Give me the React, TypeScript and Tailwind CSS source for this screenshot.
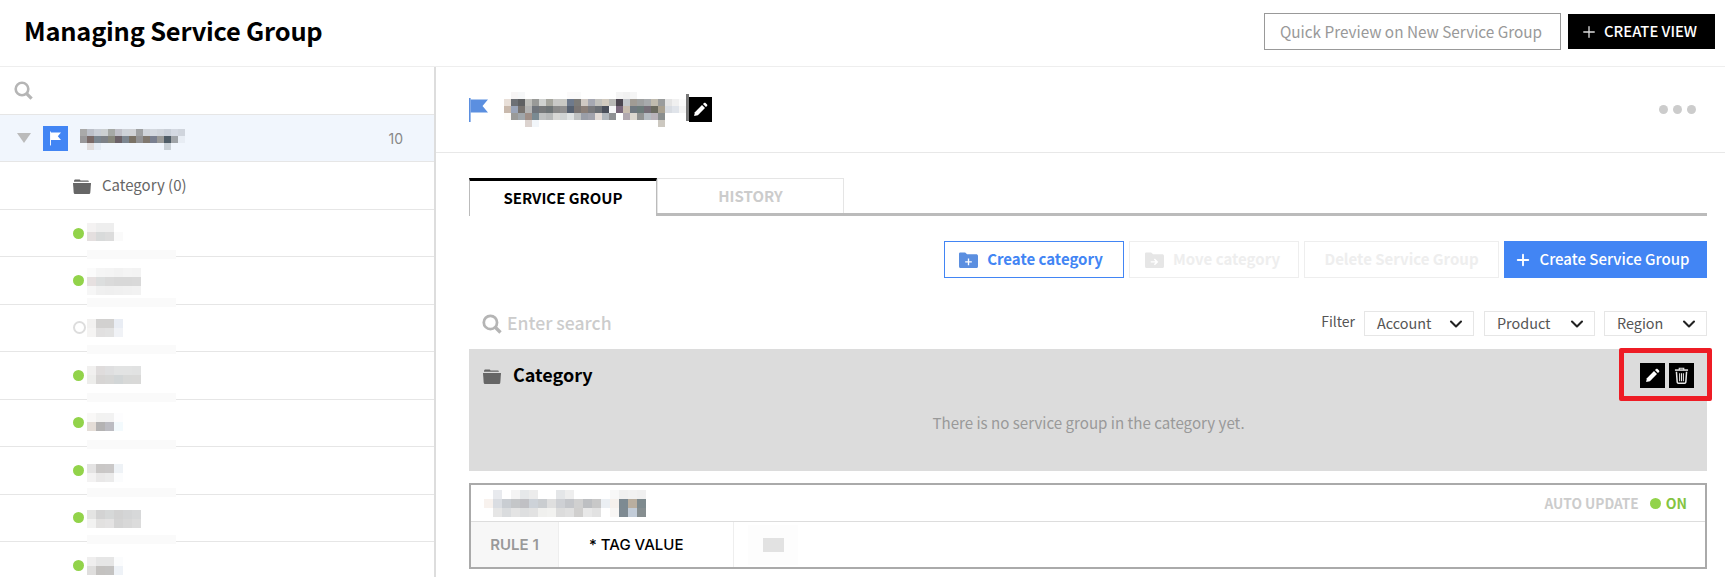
import { ChevronDown, Plus } from "lucide-react";

const sansFont = "font-['Noto_Sans_CJK_KR','Noto_Sans',sans-serif]";

type MosaicProps = {
  rows: string[][];
  cell: number;
  className?: string;
};

// blurred-out names in the screenshot: a small grid of flat colour cells
const Mosaic = ({ rows, cell, className = "" }: MosaicProps) => (
  <div className={`flex shrink-0 flex-col ${className}`}>
    {rows.map((row, r) => (
      <div key={r} className="flex">
        {row.map((color, c) => (
          <div
            key={c}
            style={{ width: cell, height: cell, backgroundColor: color }}
          />
        ))}
      </div>
    ))}
  </div>
);

const FolderIcon = ({ className = "" }: { className?: string }) => (
  <svg viewBox="0 0 18 16" className={className} fill="#666666">
    <path d="M1 3.2 C1 2 1.6 1.5 2.6 1.5 H6.2 C7 1.5 7.3 2 7.6 2.6 H14.5 C15.4 2.6 15.8 3 15.9 3.8 H1 Z" />
    <path d="M0 5 H18 L17.3 14.4 C17.2 15.4 16.6 16 15.6 16 H2.4 C1.4 16 0.8 15.4 0.7 14.4 Z" />
  </svg>
);

const FlagIcon = ({ className = "", fill }: { className?: string; fill: string }) => (
  <svg viewBox="0 0 19 24" className={className} fill={fill}>
    <rect x="0" y="0" width="1.6" height="24" />
    <path d="M1.6 1.5 H19 L13.5 8 L19 14.5 H1.6 Z" />
  </svg>
);

const PencilIcon = () => (
  <svg viewBox="0 0 16 16" className="h-[15px] w-[15px]" fill="#ffffff">
    <path d="M1.2 14.8 L2 10.8 L9.6 3.2 L12.8 6.4 L5.2 14 Z" />
    <path d="M10.6 2.2 L11.8 1 C12.3 0.6 12.9 0.6 13.4 1 L15 2.6 C15.4 3.1 15.4 3.7 15 4.2 L13.8 5.4 Z" />
  </svg>
);

const TrashIcon = () => (
  <svg viewBox="0 0 16 18" className="h-[17px] w-[15px]" fill="none" stroke="#e8e8e8">
    <path d="M1 3.2 H15" strokeWidth="1.6" />
    <path d="M5.6 3 V1.2 H10.4 V3" strokeWidth="1.2" />
    <path d="M2.6 5 L3.4 16 C3.5 16.8 3.9 17.2 4.6 17.2 H11.4 C12.1 17.2 12.5 16.8 12.6 16 L13.4 5" strokeWidth="1.6" />
    <path d="M6 6.5 V15 M8 6.5 V15 M10 6.5 V15" strokeWidth="1.1" />
  </svg>
);

const SearchIcon = ({ className = "" }: { className?: string }) => (
  <svg viewBox="0 0 19 19" className={className} fill="none" stroke="#b5b5b5">
    <circle cx="8" cy="8" r="6.3" strokeWidth="2.6" />
    <path d="M12.6 12.6 L17.6 17.6" strokeWidth="3.2" />
  </svg>
);

const IconBox = ({ children }: { children: React.ReactNode }) => (
  <div className="flex h-[25px] w-[25px] items-center justify-center bg-black">
    {children}
  </div>
);

const sideRows = [
  {
    on: true,
    offset: "-mt-[3px]",
    band: true,
    rows: [
      ["#f4f2f2", "#eeeeee", "#eeeeee"],
      ["#e4dfdf", "#d8dada", "#dcdcdc", "#fafafa"],
    ],
  },
  {
    on: true,
    offset: "mt-[1px]",
    band: true,
    rows: [
      ["#fbfbfb", "#f5f5f5", "#f4f4f4", "#f2f2f2", "#f4f4f4", "#f3f3f3"],
      ["#e6e0e0", "#dcdede", "#dadada", "#d8d8d8", "#d8d8d8", "#d9d9d9"],
      ["#f6f6f6", "#f0f0f0", "#efefef", "#f0f0f0", "#f1f1f1", "#f2f2f2"],
    ],
  },
  {
    on: false,
    offset: "mt-[1px]",
    band: true,
    rows: [
      ["#f2f1f0", "#d2d1d0", "#d2d1d0", "#e9edf4"],
      ["#f5f4f3", "#e1e0e0", "#e2e2e2", "#f0f2f6"],
    ],
  },
  {
    on: true,
    offset: "",
    band: true,
    rows: [
      ["#f1f0ef", "#dfdcdc", "#dfdfe0", "#e2e3e3", "#e2e3e3", "#e1e2e2"],
      ["#ededeb", "#d7d5d4", "#d7d7d6", "#d2d6d7", "#d8d9d8", "#d9d9d8"],
    ],
  },
  {
    on: true,
    offset: "-mt-[1px]",
    band: true,
    rows: [
      ["#f9f8f7", "#f2f2f1", "#f2f2f2", "#fdfdfe"],
      ["#e4ddd7", "#b4b3b3", "#bcbcc2", "#f3fafd"],
    ],
  },
  {
    on: true,
    offset: "mt-[5px]",
    band: true,
    rows: [
      ["#e4e3e3", "#c9c7c6", "#cac8c8", "#eef2f6"],
      ["#f3f2f2", "#e9e8e8", "#ebebeb", "#fbfcfd"],
    ],
  },
  {
    on: true,
    offset: "mt-[2px]",
    band: true,
    rows: [
      ["#e4e4e3", "#d3d3d3", "#d6d8d8", "#d2d2d2", "#d4d5d6", "#d7d8d9"],
      ["#f2f2f1", "#e2e1e0", "#e4e3e3", "#d4d4d4", "#d8d8d8", "#dcdcdc"],
    ],
  },
  {
    on: true,
    offset: "mt-[1px]",
    band: false,
    rows: [
      ["#efeeee", "#e6e6e6", "#e6e6e6", "#fbfcfd"],
      ["#dfdedd", "#c4c2c0", "#c4c3c2", "#eef2f7"],
    ],
  },
];

const groupNameRows = [
  ["#ffffff", "#f7f5f5", "#f6f7f8", "#ffffff", "#ffffff", "#ffffff", "#ffffff", "#ffffff", "#ffffff", "#fbfafa", "#fafafa", "#ffffff", "#ffffff", "#ffffff", "#ffffff", "#ffffff", "#f4f4f4", "#f1f1f1", "#f5f5f5", "#ffffff", "#ffffff", "#ffffff", "#ffffff", "#ffffff", "#ffffff", "#ffffff"],
  ["#e8dfd8", "#6d7075", "#5f6062", "#bfbfbb", "#999a98", "#d0d2d0", "#a6a69e", "#c8c8c6", "#c9c9c4", "#6e7a8c", "#7c7b78", "#cfc8c2", "#a6a8b2", "#c2c1bd", "#d1cabf", "#b8b9b6", "#4c4650", "#c4c7cb", "#a09b94", "#9ea0a0", "#a7aaac", "#c0bbaf", "#9a9c9c", "#e4e4e4", "#f0f0f0", "#fbfbfb"],
  ["#c9b9ac", "#9aa4b8", "#78736f", "#b3b3b3", "#70757c", "#77797a", "#6e7476", "#8a8a8a", "#909090", "#566170", "#7a7573", "#8b7f78", "#79797c", "#6b6f75", "#4a4f5b", "#f7f7f9", "#7a687c", "#c9bdb0", "#6f7880", "#6c7b7a", "#766f78", "#6b6b60", "#a8a090", "#d8dce2", "#e0e4ea", "#f4f4f4"],
  ["#fdfbf8", "#9a9a98", "#a0a6ab", "#9f8f88", "#7a8a92", "#c0c2c2", "#b8baba", "#d8d8d6", "#d0d4d4", "#dfe3e3", "#bfc2c2", "#9a9ea8", "#a2a3ad", "#e4dcd8", "#b1b7bd", "#8f9194", "#ffffff", "#b1a8b0", "#dcd8d0", "#929493", "#b5bcc2", "#b9b3ba", "#8a8e8e", "#ffffff", "#ffffff", "#ffffff"],
  ["#ffffff", "#ffffff", "#ffffff", "#dcd3cf", "#f2f6fa", "#ffffff", "#ffffff", "#ffffff", "#ffffff", "#ffffff", "#ffffff", "#ffffff", "#ffffff", "#ffffff", "#ffffff", "#ffffff", "#ffffff", "#ffffff", "#ffffff", "#ffffff", "#ffffff", "#ffffff", "#ccc8c0", "#ffffff", "#ffffff", "#ffffff"],
];

const sideNameRows = [
  ["#a9a9a9", "#bcc0c9", "#c9ced6", "#ccd0d2", "#a6a9a6", "#c0c0c8", "#ced2d8", "#d0d2d6", "#9fa1a3", "#d0d4da", "#d4d9e0", "#d0d5dc", "#c9cfd8", "#d4d9e2", "#d0d5dd"],
  ["#99989a", "#7a6a68", "#7b8690", "#7e8288", "#87877c", "#6c6268", "#7d8690", "#7a7266", "#929294", "#80786f", "#7a8090", "#9a9a98", "#4f5c66", "#a0a4a8", "#e8edf4"],
  ["#f3f6fb", "#e0dcdc", "#e6edf6", "#f1f6fd", "#f1f6fd", "#f1f6fd", "#f1f6fd", "#f1f6fd", "#f1f6fd", "#f1f6fd", "#f1f6fd", "#f1f6fd", "#c9d0d6", "#f1f6fd", "#f1f6fd"],
];

const cardNameRows = [
  ["#ffffff", "#e8eaee", "#ffffff", "#f4f4f4", "#e6e8ea", "#ececec", "#ffffff", "#ffffff", "#e4e6e8", "#eeeeee", "#ffffff", "#ffffff", "#ffffff", "#ffffff", "#f8f8f8", "#f0f0f0", "#f2f2f2", "#f0f0f0"],
  ["#f8f2ee", "#dadde2", "#c9cdd2", "#c4c6c8", "#c0c0c4", "#cdd2d8", "#cacdd0", "#dfdfdf", "#ced0d4", "#c4c6ca", "#d0d0d0", "#bdbfc2", "#c8c8c8", "#ebeff3", "#f5f0ec", "#7d8a92", "#b9ae9f", "#7e8a8e"],
  ["#ffffff", "#e6e6e6", "#dadcde", "#e4e4e4", "#dedfe0", "#e2e2e2", "#f0f0ee", "#f2f2f0", "#dcdcdc", "#e0e0e0", "#d0cfce", "#e8e8e8", "#e2e2e2", "#ffffff", "#f8f6f4", "#7e8a92", "#c2ccd8", "#868e90"],
];

const App = () => {
  return (
    <div className={`h-[577px] w-[1725px] overflow-hidden bg-white ${sansFont}`}>
      <header className="flex h-[67px] items-center justify-between border-b border-[#eeeeee] pr-[10px] pb-[3px] pl-[24px]">
        <h1 className="-translate-y-[1px] text-[25.4px] font-bold tracking-[-0.2px] text-black">
          Managing Service Group
        </h1>
        <div className="flex items-center gap-[7px]">
          <button className="h-[37px] w-[297px] border border-[#999999] pr-[3px] text-[15.3px] text-[#999999]">
            Quick Preview on New Service Group
          </button>
          <button className="flex h-[35px] w-[147px] items-center gap-[6px] bg-black pl-[12px] text-[14.8px] font-medium text-white">
            <Plus size={18} strokeWidth={1.75} color="#dddddd" />
            CREATE VIEW
          </button>
        </div>
      </header>

      <div className="flex">
        <aside className="h-[510px] w-[436px] shrink-0 border-r-2 border-[#dddddd]">
          <div className="flex h-[48px] items-center border-b border-[#e6e6e6] pl-[14px]">
            <SearchIcon className="h-[19px] w-[19px]" />
          </div>
          <div className="flex h-[47.44px] items-center border-b border-[#e6e6e6] bg-[#f1f6fd] pr-[31px] pl-[17px]">
            <div className="h-0 w-0 border-x-[7px] border-t-[10px] border-x-transparent border-t-[#bbbbbb]" />
            <div className="ml-[12px] flex h-[25px] w-[25px] items-center justify-center bg-[#4285f4]">
              <FlagIcon className="h-[15px] w-[11px]" fill="#ffffff" />
            </div>
            <Mosaic rows={sideNameRows} cell={7} className="ml-[12px] mt-[3px]" />
            <span className="ml-auto font-['Inter',sans-serif] text-[14px] text-[#888888]">
              10
            </span>
          </div>
          <div className="flex h-[47.44px] items-center border-b border-[#e6e6e6] pl-[73px]">
            <FolderIcon className="h-[16px] w-[18px]" />
            <span className="ml-[11px] text-[15px] text-[#666666]">Category (0)</span>
          </div>
          {sideRows.map((item, i) => (
            <div
              key={i}
              className="relative flex h-[47.44px] items-center border-b border-[#e6e6e6] pl-[73px]"
            >
              {item.on ? (
                <span className="h-[11px] w-[11px] rounded-full bg-[#92d34a]" />
              ) : (
                <span className="h-[13px] w-[13px] rounded-full border-2 border-[#dddddd]" />
              )}
              <Mosaic
                rows={item.rows}
                cell={9}
                className={`${item.on ? "ml-[3px]" : "ml-[1px]"} ${item.offset}`}
              />
              {item.band && (
                <div className="absolute bottom-[-3px] left-[87px] h-[9px] w-[89px] bg-[#fafafa]" />
              )}
            </div>
          ))}
        </aside>

        <main className="min-w-0 flex-1">
          <div className="flex h-[86px] items-center border-b border-[#e8e8e8] pr-[29px] pl-[33px]">
            <FlagIcon className="h-[24px] w-[19px]" fill="#5b8fe0" />
            <Mosaic rows={groupNameRows} cell={7} className="ml-[16px] -mt-[1px]" />
            <div className="h-[27px] w-[3px] -translate-y-[2px] bg-[#777777]" />
            <div className="flex h-[25px] w-[23px] items-center justify-center bg-black">
              <PencilIcon />
            </div>
            <div className="ml-auto flex gap-[5px]">
              <span className="h-[9px] w-[9px] rounded-full bg-[#cccccc]" />
              <span className="h-[9px] w-[9px] rounded-full bg-[#cccccc]" />
              <span className="h-[9px] w-[9px] rounded-full bg-[#cccccc]" />
            </div>
          </div>

          <div className="pr-[18px] pl-[33px]">
            <div className="mt-[25px] flex h-[38px]">
              <div className="flex w-[188px] items-center justify-center border-x border-t-[3px] border-x-[#bbbbbb] border-t-black text-[15px] font-bold text-black">
                SERVICE GROUP
              </div>
              <div className="flex-1 border-b-[3px] border-[#bbbbbb]">
                <div className="flex h-[35px] w-[187px] items-center justify-center border-x border-t border-[#e5e5e5] text-[15px] font-bold text-[#cccccc]">
                  HISTORY
                </div>
              </div>
            </div>

            <div className="mt-[25px] flex h-[37px] justify-end gap-[5px] text-[15px]">
              <button className="flex w-[180px] items-center justify-center gap-[9px] border border-[#4285f4] pr-[6px] font-bold text-[#4285f4]">
                <svg viewBox="0 0 20 17" className="h-[18px] w-[19px]">
                  <path d="M0 2 C0 1 .7 .5 1.6 .5 H6.5 L8.5 2.5 H18 C19.2 2.5 20 3.2 20 4.4 V15 C20 16.2 19.2 17 18 17 H2 C.8 17 0 16.2 0 15 Z" fill="#5b8fe0" />
                  <path d="M9.3 7 H10.7 V9.8 H13.5 V11.2 H10.7 V14 H9.3 V11.2 H6.5 V9.8 H9.3 Z" fill="#ffffff" />
                </svg>
                Create category
              </button>
              <button className="flex w-[170px] items-center justify-center gap-[9px] border border-[#eeeeee] pr-[3px] font-bold text-[#eeeeee]">
                <svg viewBox="0 0 20 17" className="h-[18px] w-[19px]">
                  <path d="M0 2 C0 1 .7 .5 1.6 .5 H6.5 L8.5 2.5 H18 C19.2 2.5 20 3.2 20 4.4 V15 C20 16.2 19.2 17 18 17 H2 C.8 17 0 16.2 0 15 Z" fill="#e6e6e6" />
                  <path d="M6 9.8 H11 L9.4 8 L10.4 7 L14 10.5 L10.4 14 L9.4 13 L11 11.2 H6 Z" fill="#ffffff" />
                </svg>
                Move category
              </button>
              <button className="w-[195px] border border-[#eeeeee] font-bold text-[#eeeeee]">
                Delete Service Group
              </button>
              <button className="flex w-[203px] items-center justify-center gap-[7px] bg-[#4285f4] pr-[7px] font-medium text-white">
                <Plus size={18} strokeWidth={2.5} />
                Create Service Group
              </button>
            </div>

            <div className="mt-[33px] flex h-[25px] items-center">
              <SearchIcon className="ml-[13px] h-[20px] w-[20px]" />
              <span className="ml-[5px] text-[17.6px] font-medium text-[#cccccc]">
                Enter search
              </span>
              <span className="ml-auto mr-[9px] -translate-y-[2px] text-[14px] text-[#555555]">
                Filter
              </span>
              {["Account", "Product", "Region"].map((name, i) => (
                <div
                  key={name}
                  className={`flex h-[25px] items-center justify-between border border-[#e6e6e6] pr-[7px] pl-[12px] text-[14.4px] text-[#555555] ${
                    i === 0 ? "w-[110px]" : i === 1 ? "ml-[10px] w-[111px]" : "ml-[9px] w-[103px]"
                  }`}
                >
                  <span className="-translate-y-[1px]">{name}</span>
                  <ChevronDown size={20} strokeWidth={2.5} color="#222222" />
                </div>
              ))}
            </div>

            <section className="relative mt-[13px] h-[122px] bg-[#dcdcdc] pt-[14px] pr-[13px] pl-[14px]">
              <div className="flex h-[25px] items-center">
                <FolderIcon className="h-[16px] w-[18px]" />
                <span className="ml-[12px] -translate-y-[1px] text-[18px] font-bold text-black">Category</span>
                <div className="ml-auto flex gap-[4px]">
                  <IconBox>
                    <PencilIcon />
                  </IconBox>
                  <IconBox>
                    <TrashIcon />
                  </IconBox>
                </div>
              </div>
              <p className="mt-[23px] text-center text-[15.1px] text-[#999999]">
                There is no service group in the category yet.
              </p>
              <div className="absolute -top-[1px] -right-[5px] h-[53px] w-[93px] rounded-[2px] border-[5px] border-[#ee1c25]" />
            </section>

            <section className="mt-[12px] h-[86px] border-2 border-[#aaaaaa]">
              <div className="flex h-[37px] items-center border-b border-[#dddddd] pr-[18px] pl-[13px]">
                <Mosaic rows={cardNameRows} cell={9} />
                <span className="ml-auto text-[13.7px] font-bold text-[#cccccc]">AUTO UPDATE</span>
                <span className="ml-[11px] h-[11px] w-[11px] rounded-full bg-[#92d34a]" />
                <span className="ml-[5px] text-[14px] font-bold text-[#84c441]">ON</span>
              </div>
              <div className="flex h-[45px] items-center font-['Inter',sans-serif]">
                <div className="flex h-full w-[88px] items-center justify-center border-r border-[#eeeeee] bg-[#f7f7f7] pt-[1px] text-[15px] font-semibold text-[#999999]">
                  RULE 1
                </div>
                <div className="flex h-full w-[175px] items-center border-r border-[#eeeeee] pt-[1px] pl-[30px] text-[15px] font-medium text-black">
                  * TAG VALUE
                </div>
                <div className="ml-[14px] flex h-[40px] w-[50px] items-center justify-center bg-[#fdfdfd]">
                  <div className="h-[14px] w-[21px] bg-[#e2e2e2]" />
                </div>
              </div>
            </section>
          </div>
        </main>
      </div>
    </div>
  );
};

export default App;
